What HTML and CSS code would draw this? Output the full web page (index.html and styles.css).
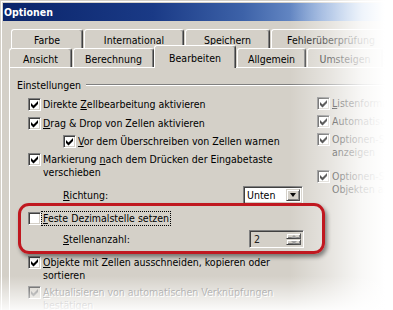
FILE: index.html
```html
<!DOCTYPE html>
<html lang="de">
<head>
<meta charset="utf-8">
<title>Optionen</title>
<link rel="stylesheet" href="styles.css">
</head>
<body>
<div class="win">
  <div class="titlebar"><span class="title">Optionen</span></div>
  <div class="tabs">
    <div class="tabrow row1">
      <div class="tab t-farbe">Farbe</div>
      <div class="tab t-intl">International</div>
      <div class="tab t-speichern">Speichern</div>
      <div class="tab t-fehler">Fehlerüberprüfung</div>
    </div>
    <div class="tabrow row2">
      <div class="tab t-ansicht">Ansicht</div>
      <div class="tab t-berechnung">Berechnung</div>
      <div class="tab t-bearbeiten sel">Bearbeiten</div>
      <div class="tab t-allgemein">Allgemein</div>
      <div class="tab t-umsteigen">Umsteigen</div>
    </div>
  </div>
  <div class="panel">
    <div class="group-head"><span class="group-label">Einstellungen</span><span class="etch"></span></div>
    <div class="cols">
      <div class="col-left">
        <div class="opt r1"><span class="cb"><svg viewBox="0 0 11 11" class="chk"><polygon points="2,4 4.5,6.5 9,2 9,5 4.5,9.5 2,7"/></svg></span><span class="lbl">Direkte <u>Z</u>ellbearbeitung aktivieren</span></div>
        <div class="opt r2"><span class="cb"><svg viewBox="0 0 11 11" class="chk"><polygon points="2,4 4.5,6.5 9,2 9,5 4.5,9.5 2,7"/></svg></span><span class="lbl"><u>D</u>rag &amp; Drop von Zellen aktivieren</span></div>
        <div class="opt r3 indent"><span class="cb"><svg viewBox="0 0 11 11" class="chk"><polygon points="2,4 4.5,6.5 9,2 9,5 4.5,9.5 2,7"/></svg></span><span class="lbl"><u>V</u>or dem Überschreiben von Zellen warnen</span></div>
        <div class="opt r4"><span class="cb"><svg viewBox="0 0 11 11" class="chk"><polygon points="2,4 4.5,6.5 9,2 9,5 4.5,9.5 2,7"/></svg></span><span class="lbl">Markierung <u>n</u>ach dem Drücken der Eingabetaste<br>verschieben</span></div>
        <div class="field f-richtung"><span class="field-label w-richtung"><u>R</u>ichtung:</span><span class="combo"><span class="combo-text">Unten</span><span class="combo-btn"><span class="arrow"></span></span></span></div>
        <div class="opt r5"><span class="cb"></span><span class="lbl focus"><u>F</u>este Dezimalstelle setzen</span></div>
        <div class="field f-stellen"><span class="field-label w-stellen"><u>S</u>tellenanzahl:</span><span class="spin"><span class="spin-text">2</span><span class="spin-btns"><span class="spin-b"><span class="up"></span></span><span class="spin-b"><span class="down"></span></span></span></span></div>
        <div class="opt r6"><span class="cb"><svg viewBox="0 0 11 11" class="chk"><polygon points="2,4 4.5,6.5 9,2 9,5 4.5,9.5 2,7"/></svg></span><span class="lbl"><u>O</u>bjekte mit Zellen ausschneiden, kopieren oder<br>sortieren</span></div>
        <div class="opt r7 disabled"><span class="cb"><svg viewBox="0 0 11 11" class="chk"><polygon points="2,4 4.5,6.5 9,2 9,5 4.5,9.5 2,7"/></svg></span><span class="lbl"><u>A</u>ktualisieren von automatischen Verknüpfungen<br>bestätigen</span></div>
      </div>
      <div class="col-right">
        <div class="opt q1"><span class="cb"><svg viewBox="0 0 11 11" class="chk"><polygon points="2,4 4.5,6.5 9,2 9,5 4.5,9.5 2,7"/></svg></span><span class="lbl"><u>L</u>istenformate</span></div>
        <div class="opt q2"><span class="cb"><svg viewBox="0 0 11 11" class="chk"><polygon points="2,4 4.5,6.5 9,2 9,5 4.5,9.5 2,7"/></svg></span><span class="lbl">Automatische</span></div>
        <div class="opt q3"><span class="cb"><svg viewBox="0 0 11 11" class="chk"><polygon points="2,4 4.5,6.5 9,2 9,5 4.5,9.5 2,7"/></svg></span><span class="lbl">Optionen-Sch<br>anzeigen</span></div>
        <div class="opt q4"><span class="cb"><svg viewBox="0 0 11 11" class="chk"><polygon points="2,4 4.5,6.5 9,2 9,5 4.5,9.5 2,7"/></svg></span><span class="lbl">Optionen-Sch<br>Objekten an</span></div>
      </div>
    </div>
  </div>
  <div class="fade-r"></div>
  <div class="fade-b"></div>
  <div class="highlight"></div>
</div>
</body>
</html>
```
FILE: styles.css
```css
* { box-sizing: border-box; }
html, body { margin: 0; padding: 0; }
body {
  width: 393px;
  height: 310px;
  overflow: hidden;
  background: #fff;
  font-family: "DejaVu Sans Condensed", "DejaVu Sans", sans-serif;
  font-size: 10.5px;
  color: #000;
}
.win {
  position: relative;
  width: 393px;
  height: 310px;
  overflow: hidden;
  background: #d4d0c8;
  padding: 3px 0 0 3px;
  box-shadow: inset 1px 1px 0 #d4d0c8, inset 2px 2px 0 #fff;
}
.titlebar {
  height: 18px;
  width: 390px;
  background: linear-gradient(to right, #0a246a 0px, #1a3a86 150px, #3d62a8 240px, #7c9ed4 320px, #a6caf0 390px);
  color: #fff;
  font-weight: bold;
  line-height: 18px;
  padding-left: 1px;
}
.tabs { margin-top: 8px; }
.tabrow {
  display: flex;
  height: 19px;
  align-items: flex-end;
}
.row1 { padding-left: 8px; }
.row2 { padding-left: 6px; }
.tab {
  flex: none;
  height: 19px;
  background: #d4d0c8;
  border: 1px solid #fff;
  border-bottom: 0;
  border-right-color: #404040;
  box-shadow: inset -1px 0 0 #808080;
  border-radius: 3px 3px 0 0;
  text-align: center;
  padding-top: 4px;
  line-height: 13px;
  white-space: nowrap;
}
.t-farbe { width: 72px; }
.t-intl { width: 100px; margin-left: 1px; }
.t-speichern { width: 85px; margin-left: 1px; }
.t-fehler { width: 120px; margin-left: 1px; }
.t-ansicht { width: 63px; }
.t-berechnung { width: 81px; margin-left: 1px; }
.t-bearbeiten { width: 82px; }
.t-allgemein { width: 69px; margin-left: 1px; }
.t-umsteigen { width: 76px; margin-left: 1px; }
.tab.sel {
  position: relative;
  z-index: 2;
  height: 23px;
  margin-bottom: -1px;
  padding-top: 6px;
}
.panel {
  margin-left: 6px;
  height: 260px;
  border-top: 1px solid #fff;
  border-left: 1px solid #fff;
  padding-top: 10px;
}
.group-head {
  display: flex;
  align-items: center;
  height: 14px;
  line-height: 14px;
  padding-left: 7px;
}
.etch {
  flex: 1;
  height: 2px;
  margin-left: 5px;
  border-top: 1px solid #808080;
  border-bottom: 1px solid #fff;
}
.cols {
  display: flex;
  margin-top: 6px;
}
.col-left {
  flex: none;
  width: 307px;
  padding-left: 18px;
}
.col-right {
  flex: none;
  width: 76px;
  margin-top: -1px;
  white-space: nowrap;
  overflow: hidden;
}
.opt {
  display: flex;
  align-items: flex-start;
  line-height: 13px;
}
.lbl { white-space: nowrap; }
.cb {
  flex: none;
  width: 13px;
  height: 13px;
  margin-right: 2px;
  background: #fff;
  border: 1px solid;
  border-color: #808080 #fff #fff #808080;
  box-shadow: inset 1px 1px 0 #404040, inset -1px -1px 0 #d4d0c8;
}
.chk { display: block; width: 11px; height: 11px; fill: #000; }
.disabled { color: #808080; text-shadow: 1px 1px 0 #fff; }
.disabled .cb { background: #d4d0c8; }
.disabled .chk { fill: #808080; }
.r2 { margin-top: 6px; }
.r3 { margin-top: 5px; }
.indent { padding-left: 35px; }
.r4 { margin-top: 5px; }
.r5 { margin-top: 8px; }
.r6 { margin-top: 8px; }
.r7 { margin-top: 4px; }
.q2 { margin-top: 5px; }
.q3 { margin-top: 5px; }
.q4 { margin-top: 11px; }
.focus {
  outline: 1px dotted #000;
  margin-left: -1px;
  padding-left: 1px;
  padding-right: 1px;
}
.field {
  display: flex;
  align-items: center;
  height: 18px;
  padding-left: 35px;
}
.f-richtung { margin-top: 7px; }
.f-stellen { margin-top: 5px; }
.field-label { flex: none; white-space: nowrap; }
.w-richtung { width: 180px; }
.w-stellen { width: 186px; }
.combo, .spin {
  display: flex;
  height: 18px;
  padding: 2px;
  border: 1px solid;
  border-color: #808080 #fff #fff #808080;
  box-shadow: inset 1px 1px 0 #404040, inset -1px -1px 0 #d4d0c8;
}
.combo { width: 60px; background: #fff; }
.spin { width: 55px; background: #d4d0c8; }
.combo-text, .spin-text { flex: 1; line-height: 13px; padding-left: 1px; }
.spin-text { color: #202020; padding-left: 2px; }
.combo-btn {
  flex: none;
  width: 14px;
  height: 12px;
  background: #d4d0c8;
  border: 1px solid;
  border-color: #d4d0c8 #404040 #404040 #d4d0c8;
  box-shadow: inset 1px 1px 0 #fff, inset -1px -1px 0 #808080;
  display: flex;
  align-items: center;
  justify-content: center;
}
.arrow {
  width: 0; height: 0;
  border-left: 3.5px solid transparent;
  border-right: 3.5px solid transparent;
  border-top: 4px solid #000;
}
.spin-btns { flex: none; width: 15px; display: flex; flex-direction: column; }
.spin-b {
  flex: 1;
  background: #d4d0c8;
  border: 1px solid;
  border-color: #d4d0c8 #404040 #404040 #d4d0c8;
  box-shadow: inset 1px 1px 0 #fff, inset -1px -1px 0 #808080;
  display: flex;
  align-items: center;
  justify-content: center;
}
.up, .down {
  width: 0; height: 0;
  border-left: 3px solid transparent;
  border-right: 3px solid transparent;
}
.up { border-bottom: 3px solid #9a9a9a; }
.down { border-top: 3px solid #9a9a9a; }
.fade-r {
  position: absolute;
  top: 0;
  left: 290px;
  width: 103px;
  height: 310px;
  z-index: 10;
  background: linear-gradient(to right, rgba(255,255,255,0) 0%, rgba(255,255,255,0.45) 40%, rgba(255,255,255,0.85) 70%, #fff 92%);
}
.fade-b {
  position: absolute;
  left: 0;
  top: 276px;
  width: 393px;
  height: 34px;
  z-index: 10;
  background: linear-gradient(to bottom, rgba(255,255,255,0), rgba(255,255,255,0.9));
}
.highlight {
  position: absolute;
  left: 18px;
  top: 203px;
  width: 307px;
  height: 51px;
  z-index: 11;
  border: 3px solid #c01820;
  border-radius: 11px;
  box-shadow: 2px 3px 4px rgba(0,0,0,0.45);
}
```
